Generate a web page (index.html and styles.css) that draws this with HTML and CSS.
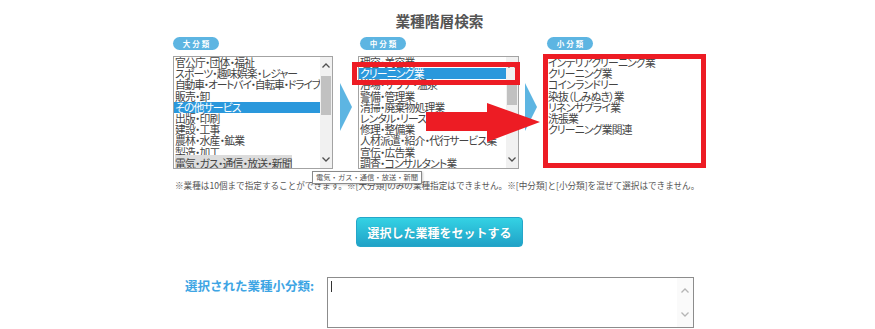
FILE: index.html
```html
<!DOCTYPE html>
<html lang="ja">

<head>
  <meta charset="UTF-8">
  <meta name="viewport" content="width=device-width, initial-scale=1.0">
  <title>業種階層検索</title>
  <link rel="stylesheet" href="styles.css">
</head>

<body>
  <div class="finder">
    <h1 class="finder-title">業種階層検索</h1>

    <div class="levels">
      <div class="level level-large">
        <span class="badge">大分類</span>
        <div class="listbox">
          <ul class="options">
            <li>官公庁・団体・福祉</li>
            <li>スポーツ・趣味娯楽・レジャー</li>
            <li class="long">自動車・オートバイ・自転車・ドライブ</li>
            <li>販売・卸</li>
            <li class="selected">その他サービス</li>
            <li>出版・印刷</li>
            <li>建設・工事</li>
            <li>農林・水産・鉱業</li>
            <li>製造・加工</li>
            <li><span class="hovered">電気・ガス・通信・放送・新聞</span></li>
          </ul>
          <div class="scrollbar">
            <span class="sb-btn"><svg width="8" height="5" viewBox="0 0 8 5"><polyline points="0.5,4.5 4,1 7.5,4.5" /></svg></span>
            <span class="sb-track"><span class="sb-thumb thumb-large"></span></span>
            <span class="sb-btn"><svg width="8" height="5" viewBox="0 0 8 5"><polyline points="0.5,0.5 4,4 7.5,0.5" /></svg></span>
          </div>
        </div>
      </div>

      <div class="step step-first"><span class="step-arrow"></span></div>

      <div class="level level-middle">
        <span class="badge">中分類</span>
        <div class="listbox">
          <ul class="options">
            <li>理容・美容業</li>
            <li class="selected">クリーニング業</li>
            <li>浴場・サウナ・温泉</li>
            <li>警備・管理業</li>
            <li>清掃・廃棄物処理業</li>
            <li>レンタル・リース業</li>
            <li>修理・整備業</li>
            <li>人材派遣・紹介・代行サービス業</li>
            <li>宣伝・広告業</li>
            <li>調査・コンサルタント業</li>
          </ul>
          <div class="scrollbar">
            <span class="sb-btn"><svg width="8" height="5" viewBox="0 0 8 5"><polyline points="0.5,4.5 4,1 7.5,4.5" /></svg></span>
            <span class="sb-track"><span class="sb-thumb thumb-middle"></span></span>
            <span class="sb-btn"><svg width="8" height="5" viewBox="0 0 8 5"><polyline points="0.5,0.5 4,4 7.5,0.5" /></svg></span>
          </div>
        </div>
      </div>

      <div class="step step-second"><span class="step-arrow"></span></div>

      <div class="level level-small">
        <span class="badge">小分類</span>
        <div class="listbox listbox-plain">
          <ul class="options">
            <li>インテリアクリーニング業</li>
            <li>クリーニング業</li>
            <li>コインランドリー</li>
            <li>染抜（しみぬき）業</li>
            <li>リネンサプライ業</li>
            <li>洗張業</li>
            <li>クリーニング業関連</li>
          </ul>
        </div>
      </div>
    </div>

    <p class="note">※業種は10個まで指定することができます。※[大分類]のみの業種指定はできません。※[中分類]と[小分類]を混ぜて選択はできません。</p>

    <div class="actions">
      <button class="set-btn" type="button">選択した業種をセットする</button>
    </div>

    <div class="picked">
      <label class="picked-label" for="picked-box">選択された業種小分類:</label>
      <div class="picked-box" id="picked-box">
        <span class="caret"></span>
        <span class="picked-scroll">
          <svg width="8" height="5" viewBox="0 0 8 5"><polyline points="0.5,4.5 4,1 7.5,4.5" /></svg>
          <svg width="8" height="5" viewBox="0 0 8 5"><polyline points="0.5,0.5 4,4 7.5,0.5" /></svg>
        </span>
      </div>
    </div>

    <!-- annotations drawn over the form -->
    <div class="mark mark-middle"></div>
    <div class="mark mark-small"></div>
    <svg class="mark-arrow" width="118" height="42" viewBox="0 0 118 42">
      <polygon points="2,10 63,10 63,1 116,20 63,40 63,29 2,29" />
    </svg>
    <div class="tooltip">電気・ガス・通信・放送・新聞</div>
  </div>
</body>

</html>
```

FILE: styles.css
```css
body {
  margin: 0;
  padding: 0;
  background-color: #fff;
  font-family: 'Noto Sans CJK JP', 'Noto Sans', sans-serif;
  color: #444;
}

.finder {
  position: relative;
  width: 533px;
  margin-left: 173px;
}

.finder-title {
  margin: 0;
  padding-top: 11px;
  height: 26px;
  font-size: 14.7px;
  line-height: 20px;
  font-weight: bold;
  color: #555;
  text-align: center;
}

.levels {
  display: flex;
}

.level {
  display: flex;
  flex-direction: column;
  gap: 6px;
}

.level-large {
  width: 160px;
}

.level-middle {
  width: 161px;
}

.level-small {
  width: 163px;
}

.level-middle .badge {
  margin-left: 2px;
}

.level-small .badge {
  margin-left: 4px;
}

.badge {
  width: 46px;
  height: 13px;
  border-radius: 7px;
  background-color: #5db5e2;
  color: #fff;
  font-size: 7.5px;
  font-weight: bold;
  line-height: 13px;
  letter-spacing: 2px;
  text-indent: 2px;
  text-align: center;
}

.listbox {
  display: flex;
  height: 113px;
  box-sizing: border-box;
  border: 1px solid #a3a3a3;
  background: #fff;
}

.listbox-plain {
  border-color: transparent;
}

.options {
  flex: 1;
  min-width: 0;
  margin: 0;
  padding: 0;
  list-style: none;
  overflow: hidden;
}

.options li {
  height: 11.2px;
  line-height: 11.2px;
  padding-left: 1px;
  font-size: 10.8px;
  letter-spacing: -0.8px;
  font-feature-settings: "palt";
  white-space: nowrap;
}

.options li.long {
  letter-spacing: -1.2px;
}

.listbox-plain .options li {
  padding-left: 4px;
}

.options li.selected {
  background-color: #2a98dc;
  color: #fff;
}

.hovered {
  background-color: #dcdcdc;
}

.scrollbar {
  display: flex;
  flex-direction: column;
  width: 12px;
  background-color: #f1f1f1;
}

.sb-btn {
  display: flex;
  align-items: center;
  justify-content: center;
  height: 17px;
}

.sb-btn svg polyline,
.picked-scroll svg polyline {
  fill: none;
  stroke: #505050;
  stroke-width: 1.3;
}

.sb-track {
  flex: 1;
  display: flex;
  flex-direction: column;
  align-items: center;
}

.sb-thumb {
  width: 10px;
  background-color: #c1c1c1;
}

.thumb-large {
  margin-top: 2px;
  height: 39px;
}

.thumb-middle {
  margin-top: 9px;
  height: 22px;
}

.step {
  display: flex;
  justify-content: center;
  padding-top: 46px;
  width: 25px;
}

.step-second {
  width: 24px;
}

.step-arrow {
  width: 0;
  height: 0;
  border-top: 24px solid transparent;
  border-bottom: 24px solid transparent;
  border-left: 12px solid #5db5e2;
}

.note {
  margin: 10px 0 0 2px;
  font-size: 8.6px;
  line-height: 12px;
  color: #555;
  white-space: nowrap;
}

.actions {
  display: flex;
  justify-content: center;
  margin-top: 26px;
}

.set-btn {
  height: 30px;
  padding: 0 10px;
  border: 1px solid #25a6c9;
  border-radius: 4px;
  background: linear-gradient(#34d2e4, #20a2c7);
  color: #fff;
  font-family: 'Noto Sans CJK JP', sans-serif;
  font-size: 12px;
  font-weight: bold;
  text-shadow: 0 0 1px rgba(0, 0, 0, 0.15);
  cursor: pointer;
}

.picked {
  display: flex;
  margin-top: 30px;
  padding-left: 12px;
  gap: 9px;
}

.picked-label {
  width: 133px;
  font-size: 12.5px;
  font-weight: bold;
  line-height: 18px;
  color: #3ea5e4;
  white-space: nowrap;
}

.picked-box {
  position: relative;
  width: 367px;
  height: 51px;
  box-sizing: border-box;
  border: 1px solid #8c8c8c;
}

.caret {
  position: absolute;
  left: 3px;
  top: 3px;
  width: 1px;
  height: 11px;
  background-color: #333;
}

.picked-scroll {
  position: absolute;
  right: 0;
  top: 0;
  bottom: 0;
  width: 16px;
  display: flex;
  flex-direction: column;
  align-items: center;
  justify-content: space-around;
  background-color: #fafafa;
}

.picked-scroll svg polyline {
  stroke: #b5b5b5;
}

/* red marks and tooltip lie over the form */
.mark {
  position: absolute;
  box-sizing: border-box;
  border: 5px solid #ed1c24;
}

.mark-middle {
  left: 179px;
  top: 62px;
  width: 168px;
  height: 23px;
}

.mark-small {
  left: 370px;
  top: 54px;
  width: 163px;
  height: 114px;
}

.mark-arrow {
  position: absolute;
  left: 251px;
  top: 102px;
}

.mark-arrow polygon {
  fill: #ed1c24;
}

.tooltip {
  position: absolute;
  left: 139px;
  top: 171px;
  height: 11px;
  padding: 0 3px;
  border: 1px solid #8a8a8a;
  background-color: #fff;
  box-shadow: 1px 1px 2px rgba(0, 0, 0, 0.2);
  font-size: 7.3px;
  line-height: 11px;
  color: #555;
  white-space: nowrap;
}
```
